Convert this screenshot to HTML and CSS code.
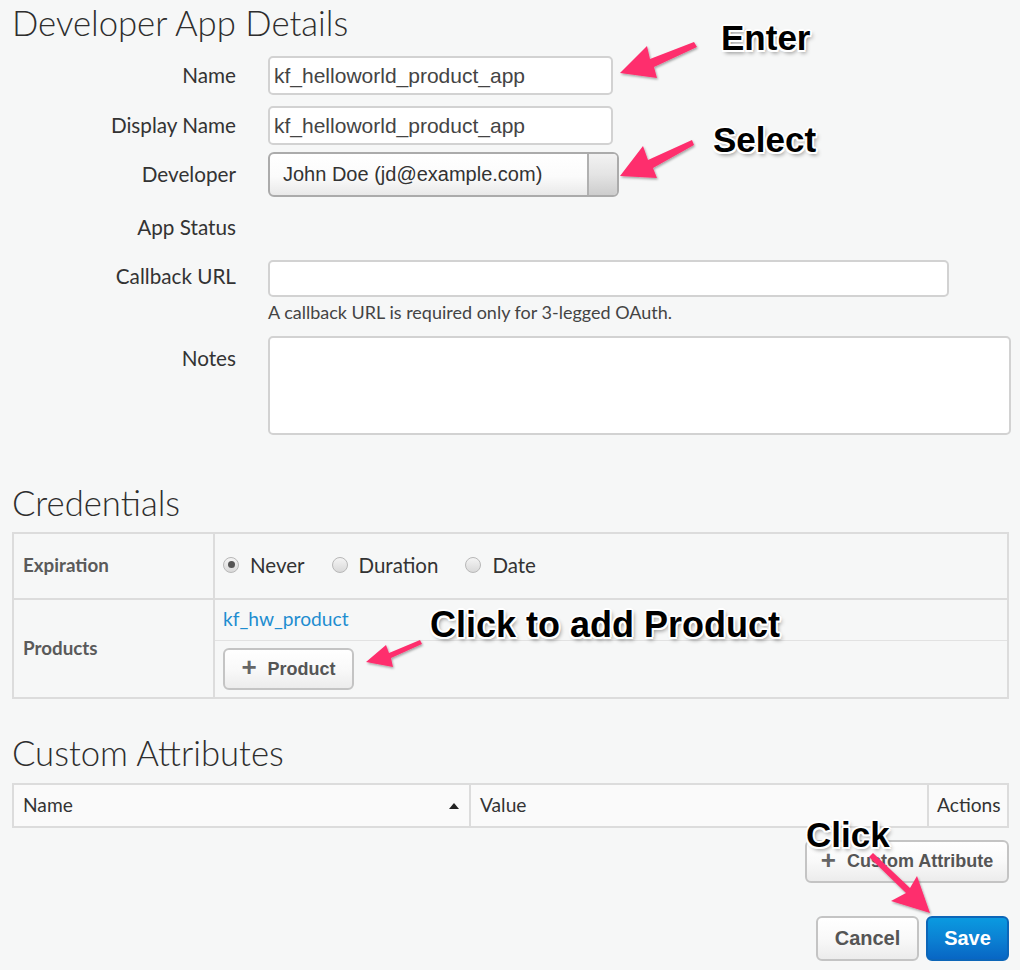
FILE: index.html
```html
<!DOCTYPE html>
<html lang="en">
<head>
<meta charset="utf-8">
<title>Developer App Details</title>
<link rel="stylesheet" href="styles.css">
</head>
<body>
<div class="page">
  <h2 class="section-title first">Developer App Details</h2>

  <div class="form">
    <div class="row">
      <div class="label h39">Name</div>
      <div class="input w-short h39">kf_helloworld_product_app</div>
    </div>
    <div class="row r-display">
      <div class="label h39">Display Name</div>
      <div class="input w-short h39">kf_helloworld_product_app</div>
    </div>
    <div class="row r-dev">
      <div class="label h45">Developer</div>
      <div class="select">
        <span class="select-text">John Doe (jd@example.com)</span>
        <span class="select-btn"></span>
      </div>
    </div>
    <div class="row r-status">
      <div class="label h40">App Status</div>
      <div></div>
    </div>
    <div class="row r-callback">
      <div class="label h37">Callback URL</div>
      <div>
        <div class="input w-long h37"></div>
        <div class="help">A callback URL is required only for 3-legged OAuth.</div>
      </div>
    </div>
    <div class="row r-notes">
      <div class="label h42">Notes</div>
      <div class="textarea"></div>
    </div>
  </div>

  <h2 class="section-title cred-title">Credentials</h2>
  <table class="cred">
    <tr class="cred-exp">
      <th>Expiration</th>
      <td>
        <div class="radios">
          <span class="radio-item"><span class="radio checked"></span>Never</span>
          <span class="radio-item"><span class="radio"></span>Duration</span>
          <span class="radio-item"><span class="radio"></span>Date</span>
        </div>
      </td>
    </tr>
    <tr class="cred-prod">
      <th>Products</th>
      <td class="prod-cell">
        <div class="prod-link-row"><span class="link">kf_hw_product</span></div>
        <div class="prod-btn-row">
          <button class="btn btn-product"><span class="plus">+</span>Product</button>
        </div>
      </td>
    </tr>
  </table>

  <h2 class="section-title attr-title">Custom Attributes</h2>
  <table class="attrs">
    <tr>
      <th class="col-name">Name<span class="sort-up"></span></th>
      <th class="col-value">Value</th>
      <th class="col-actions">Actions</th>
    </tr>
  </table>

  <div class="attr-add">
    <button class="btn btn-attr"><span class="plus">+</span>Custom Attribute</button>
  </div>

  <div class="actions">
    <button class="btn btn-cancel">Cancel</button>
    <button class="btn btn-save">Save</button>
  </div>

  <svg class="arrows" width="1020" height="970" viewBox="0 0 1020 970">
    <defs>
      <filter id="sh" x="-20%" y="-20%" width="140%" height="140%">
        <feDropShadow dx="1" dy="1.5" stdDeviation="1.2" flood-color="#000" flood-opacity="0.35"/>
      </filter>
    </defs>
    <g fill="#fe2f6d" filter="url(#sh)">
      <polygon points="620,73 647,46 650,59 694,42 697,47 654,67 657,78"/>
      <polygon points="620,176 643,146 648,160 692,140 694,145 653,168 657,178"/>
      <polygon points="366,662 386,645 389,653 420,640 422,644 391,658 393,667"/>
      <polygon points="930,913 891,901 906,893 869,857 873,853 910,888 917,876"/>
    </g>
  </svg>

  <div class="note note-enter">Enter</div>
  <div class="note note-select">Select</div>
  <div class="note note-product">Click to add Product</div>
  <div class="note note-click">Click</div>
</div>
</body>
</html>
```

FILE: styles.css
```css
* { box-sizing: border-box; }

html, body {
  margin: 0;
  padding: 0;
  background: #f6f7f7;
}

body {
  font-family: Lato, "Noto Sans", sans-serif;
  color: #333;
}

.page {
  position: relative;
  width: 1020px;
  height: 970px;
  overflow: hidden;
  padding: 0 0 0 12px;
}

.section-title {
  margin: 0;
  padding-top: 1px;
  height: 45px;
  font-weight: 300;
  font-size: 34.7px;
  line-height: 43px;
  color: #2e2e2e;
}

.form {
  margin-top: 11px;
}

.row {
  display: grid;
  grid-template-columns: 224px 1fr;
  column-gap: 32px;
  align-items: start;
}

.r-display { margin-top: 11px; }
.r-dev { margin-top: 7px; }
.r-status { margin-top: 10px; }
.r-callback { margin-top: 13px; }
.r-notes { margin-top: 14px; }

.label {
  text-align: right;
  font-size: 20.7px;
  color: #333;
  white-space: nowrap;
}
.h37 { line-height: 33px; }
.h39 { line-height: 38px; }
.h40 { line-height: 40px; }
.h42 { line-height: 44px; }
.h45 { line-height: 45px; }

.input {
  background: #fff;
  border: 2px solid #d2d2d2;
  border-radius: 5px;
  font-family: "Liberation Sans", Arial, sans-serif;
  font-size: 21px;
  color: #444;
  padding: 0 0 0 4px;
}
.input.h39 { height: 39px; line-height: 35px; }
.input.h37 { height: 37px; }
.w-short { width: 345px; }
.w-long { width: 681px; }

.select {
  display: flex;
  width: 351px;
  height: 45px;
  border: 2px solid #ababab;
  border-radius: 6px;
  background: linear-gradient(#ffffff, #fbfbfb 55%, #e9e9e9);
  overflow: hidden;
}
.select-text {
  flex: 1;
  padding-left: 13px;
  line-height: 41px;
  font-family: "Liberation Sans", Arial, sans-serif;
  font-size: 20px;
  color: #333;
}
.select-btn {
  width: 30px;
  border-left: 2px solid #b0b0b0;
  background: linear-gradient(#f2f2f2, #e4e4e4 50%, #cdcdcd);
}

.help {
  margin-top: 5px;
  font-size: 18px;
  line-height: 20px;
  color: #444;
}

.textarea {
  width: 743px;
  height: 99px;
  background: #fff;
  border: 2px solid #d2d2d2;
  border-radius: 5px;
}

.cred-title { margin-top: 45px; }

.cred {
  margin-top: 7px;
  width: 997px;
  border-collapse: collapse;
  border: 2px solid #dcdcdc;
}
.cred th, .cred td {
  border: 2px solid #dcdcdc;
  padding: 0;
}
.cred th {
  width: 201px;
  text-align: left;
  padding-left: 9px;
  padding-bottom: 3px;
  font-size: 18.8px;
  font-weight: 700;
  color: #5a5a5a;
}
.cred-exp { height: 66px; }
.cred-exp td { padding-left: 8px; padding-bottom: 3px; }

.radios {
  display: flex;
  align-items: center;
  gap: 27px;
  font-size: 20.5px;
  color: #333;
}
.radio-item {
  display: flex;
  align-items: center;
  gap: 11px;
}
.radio {
  position: relative;
  width: 16px;
  height: 16px;
  border-radius: 50%;
  border: 1px solid #b8b8b8;
  background: linear-gradient(#f4f4f4, #d9d9d9);
}
.radio.checked::after {
  content: "";
  position: absolute;
  left: 3.5px;
  top: 3.5px;
  width: 7px;
  height: 7px;
  border-radius: 50%;
  background: #555;
}

.prod-cell { vertical-align: top; }
.prod-link-row {
  height: 41px;
  border-bottom: 1px solid #e2e2e2;
  padding-left: 8px;
  line-height: 38px;
}
.link {
  color: #1e8dd0;
  font-size: 19.2px;
}
.prod-btn-row {
  height: 56px;
  padding: 7px 0 0 8px;
}

.btn {
  font-family: "Liberation Sans", Arial, sans-serif;
  font-weight: 700;
  color: #555;
  border: 2px solid #c4c4c4;
  border-radius: 6px;
  background: linear-gradient(#ffffff, #f9f9f9 50%, #ececec);
  padding: 0;
  display: inline-flex;
  align-items: center;
  justify-content: center;
}
.plus {
  font-weight: 700;
  font-size: 26px;
  color: #666;
  margin-right: 11px;
  line-height: 1;
  position: relative;
  top: -2px;
}
.btn-product {
  width: 131px;
  height: 42px;
  font-size: 18px;
}

.attr-title { margin-top: 31px; }

.attrs {
  margin-top: 8px;
  width: 997px;
  border-collapse: collapse;
  border: 2px solid #dcdcdc;
  background: #fafafa;
}
.attrs th {
  height: 43px;
  border: 2px solid #dcdcdc;
  text-align: left;
  font-weight: 400;
  font-size: 19.2px;
  color: #333;
  padding: 0 0 2px 9px;
  position: relative;
}
.col-name { width: 457px; }
.col-value { width: 458px; }
.col-actions { padding-left: 8px !important; }

.sort-up {
  position: absolute;
  right: 10px;
  top: 18px;
  width: 0;
  height: 0;
  border-left: 5px solid transparent;
  border-right: 5px solid transparent;
  border-bottom: 6px solid #222;
}

.attr-add {
  margin-top: 12px;
  display: flex;
  justify-content: flex-end;
  padding-right: 11px;
}
.btn-attr {
  width: 204px;
  height: 43px;
  font-size: 18px;
}

.actions {
  margin-top: 33px;
  display: flex;
  justify-content: flex-end;
  gap: 7px;
  padding-right: 11px;
}
.btn-cancel {
  width: 103px;
  height: 45px;
  font-size: 20px;
}
.btn-save {
  width: 83px;
  height: 45px;
  font-size: 20px;
  color: #fff;
  border-color: #0c66b8;
  background: linear-gradient(#0a9ae0, #0b7fd2 55%, #0866c4);
}

.arrows {
  position: absolute;
  left: 0;
  top: 0;
  pointer-events: none;
}

.note {
  position: absolute;
  font-family: "Liberation Sans", Arial, sans-serif;
  font-weight: 700;
  font-size: 35px;
  line-height: 35px;
  color: #000;
  white-space: nowrap;
  text-shadow:
    -1.5px -1.5px 0 #fff, 1.5px -1.5px 0 #fff,
    -1.5px 1.5px 0 #fff, 1.5px 1.5px 0 #fff,
    0 -2px 0 #fff, 0 2px 0 #fff, -2px 0 0 #fff, 2px 0 0 #fff,
    2px 3px 4px rgba(0, 0, 0, 0.45);
}
.note-enter { left: 721px; top: 20px; }
.note-select { left: 713px; top: 122px; }
.note-product { left: 430px; top: 607px; font-size: 36px; }
.note-click { left: 806px; top: 817px; }
```
